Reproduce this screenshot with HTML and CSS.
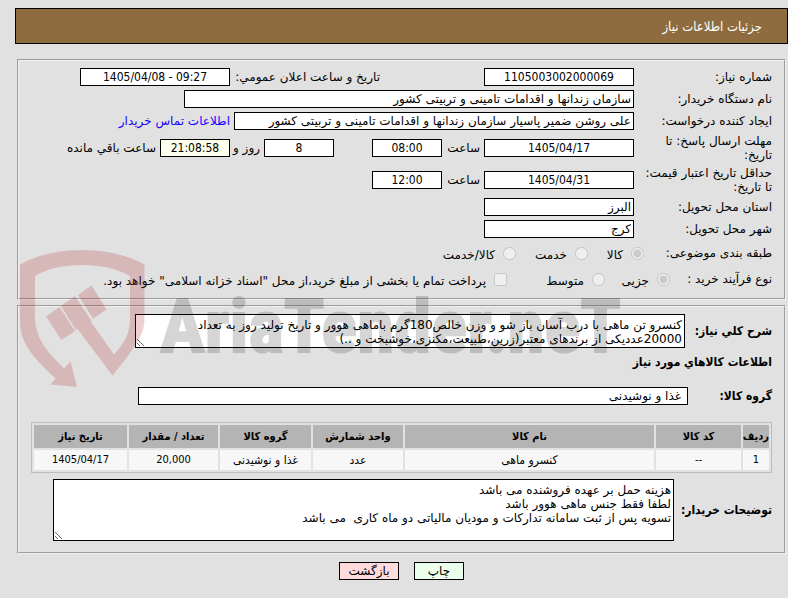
FILE: index.html
```html
<!DOCTYPE html>
<html lang="fa" dir="rtl">
<head>
  <meta charset="utf-8">
  <meta name="viewport" content="width=device-width, initial-scale=1">
  <title>جزئیات اطلاعات نیاز</title>
  <link rel="stylesheet" href="styles.css">
</head>
<body>
  <h1 class="title-bar">جزئیات اطلاعات نیاز</h1>

  <form class="need-form">
    <div class="panel">
      <div class="row">
        <label class="row-label" for="need-no">شماره نیاز:</label>
        <div class="cell"><input class="box medium" type="text" id="need-no" value="1105003002000069" readonly></div>
        <label class="date-label" for="announce">تاریخ و ساعت اعلان عمومي:</label>
        <input class="box medium" type="text" id="announce" value="1405/04/08 - 09:27" dir="ltr" readonly>
      </div>
      <div class="row">
        <label class="row-label" for="buyer">نام دستگاه خریدار:</label>
        <input class="box wide text" type="text" id="buyer" value="سازمان زندانها و اقدامات تامینی و تربیتی کشور" readonly>
      </div>
      <div class="row">
        <label class="row-label" for="creator">ایجاد کننده درخواست:</label>
        <input class="box large text" type="text" id="creator" value="علی روشن ضمیر پاسیار سازمان زندانها و اقدامات تامینی و تربیتی کشور" readonly>
        <a class="contact" href="#">اطلاعات تماس خریدار</a>
      </div>
      <div class="row tall">
        <label class="row-label" for="reply-date">مهلت ارسال پاسخ: تا<br>تاریخ:</label>
        <input class="box medium" type="text" id="reply-date" value="1405/04/17" readonly>
        <label class="hour-label" for="reply-hour">ساعت</label>
        <input class="box small" type="text" id="reply-hour" value="08:00" readonly>
        <input class="box small days" type="text" id="days" value="8" readonly>
        <label class="day-label" for="days">روز و</label>
        <input class="box small remain" type="text" id="remain" value="21:08:58" readonly>
        <label for="remain">ساعت باقي مانده</label>
      </div>
      <div class="row tall">
        <label class="row-label" for="price-date">حداقل تاریخ اعتبار قیمت:<br>تا تاریخ:</label>
        <input class="box medium" type="text" id="price-date" value="1405/04/31" readonly>
        <label class="hour-label" for="price-hour">ساعت</label>
        <input class="box small" type="text" id="price-hour" value="12:00" readonly>
      </div>
      <div class="row">
        <label class="row-label" for="province">استان محل تحویل:</label>
        <input class="box medium text" type="text" id="province" value="البرز" readonly>
      </div>
      <div class="row">
        <label class="row-label" for="city">شهر محل تحویل:</label>
        <input class="box medium text" type="text" id="city" value="کرج" readonly>
      </div>
      <div class="row options">
        <span class="kind-label">طبقه بندی موضوعی:</span>
        <label class="option goods"><input type="radio" name="kind" checked disabled>کالا</label>
        <label class="option service"><input type="radio" name="kind" disabled>خدمت</label>
        <label class="option"><input type="radio" name="kind" disabled>کالا/خدمت</label>
      </div>
      <div class="row options">
        <span class="process-label">نوع فرآیند خرید :</span>
        <label class="option minor"><input type="radio" name="process" checked disabled>جزیی</label>
        <label class="option average"><input type="radio" name="process" disabled>متوسط</label>
        <label class="option"><input type="checkbox" disabled>پرداخت تمام یا بخشی از مبلغ خرید،از محل "اسناد خزانه اسلامی" خواهد بود.</label>
      </div>
    </div>

    <div class="panel goods-panel">
      <div class="row summary-row">
        <label class="bold summary-label" for="summary">شرح کلي نياز:</label>
        <textarea class="area summary" id="summary" readonly>کنسرو تن ماهی با درب آسان باز شو و وزن خالص180گرم باماهی هوور و تاریخ تولید روز به تعداد
20000عددیکی از برندهای معتبر(زرین،طبیعت،مکنزی،خوشبخت و ..)</textarea>
      </div>
      <h2 class="bold section-title">اطلاعات کالاهاي مورد نياز</h2>
      <div class="row group-row">
        <label class="bold group-label" for="group">گروه کالا:</label>
        <input class="box full text" type="text" id="group" value="غذا و نوشیدنی" readonly>
      </div>
      <table class="goods-table">
        <thead>
          <tr>
            <th class="col-row">ردیف</th>
            <th class="col-code">کد کالا</th>
            <th>نام کالا</th>
            <th class="col-unit">واحد شمارش</th>
            <th class="col-group">گروه کالا</th>
            <th class="col-qty">تعداد / مقدار</th>
            <th class="col-date">تاریخ نیاز</th>
          </tr>
        </thead>
        <tbody>
          <tr>
            <td class="num">1</td>
            <td class="num">--</td>
            <td>کنسرو ماهی</td>
            <td>عدد</td>
            <td>غذا و نوشیدنی</td>
            <td class="num">20,000</td>
            <td class="num">1405/04/17</td>
          </tr>
        </tbody>
      </table>
      <div class="row notes-row">
        <label class="bold notes-label" for="notes">توضیحات خریدار:</label>
        <textarea class="area notes" id="notes" readonly>هزینه حمل بر عهده فروشنده می باشد
لطفا فقط جنس ماهی هوور باشد
تسویه پس از ثبت سامانه تدارکات و مودیان مالیاتی دو ماه کاری  می باشد</textarea>
      </div>
    </div>

    <div class="buttons">
      <button class="btn print" type="button">چاپ</button>
      <button class="btn back" type="button">بازگشت</button>
    </div>
  </form>

  <div class="watermark" dir="ltr">
    <svg class="shield" width="126" height="138" viewBox="20 250 126 138">
      <path d="M20 264.500Q46 250 82 250T144.500 264.500V318C144.500 334 137 345 112.500 375.500L77.500 329L76 330L61 306L75 296L91 320L91 322L114 354.500C126 341 130 332 130 318V276Q111 265 82 265T35 276V316C35 336 44 349 64 368.500L70.500 361.500L77 387L50.500 384.500L55.500 378.500C28 353 20 340 20 320Z"/>
      <path d="M46 316.500L59.500 307L75 331L61.500 340Z"/>
      <path d="M78 295L91.500 285.500L106.500 309.500L93 318.500Z"/>
    </svg>
    <span class="brand">AriaTender.neT</span>
  </div>
</body>
</html>
```
FILE: styles.css
```css
* {
  box-sizing: border-box;
}

body {
  margin: 0;
  padding: 8px 0 0 15px;
  position: relative;
  background-color: #e1e1e1;
  color: #000;
  font-family: "DejaVu Sans", sans-serif;
  font-size: 12px;
  line-height: 14px;
}

input, textarea, button {
  font-family: inherit;
}

.title-bar {
  margin: 0 0 15px;
  padding: 10px 25px;
  height: 36px;
  border: 1px solid #000;
  background-color: #8f6c40;
  color: #fff;
  font-family: "DejaVu Sans Condensed", sans-serif;
  font-size: 13px;
  font-weight: normal;
  line-height: 16px;
}

.need-form {
  padding: 0 2px;
}

.panel {
  border: 2px groove #f0f0f0;
  padding: 5px 12px 6px;
}

.goods-panel {
  margin-top: 5px;
  padding: 7px 12px 11px;
}

.row {
  display: flex;
  align-items: center;
  gap: 4px;
  min-height: 22px;
  white-space: nowrap;
}

.row.tall {
  min-height: 32px;
}

.row-label {
  width: 134px;
}

.cell {
  width: 250px;
}

.date-label {
  width: 146px;
}

.hour-label {
  width: 34px;
}

.day-label {
  width: 26px;
}

.box {
  display: block;
  height: 18px;
  padding: 0 2px;
  border: 1px solid #000;
  background-color: #fff;
  font-family: "DejaVu Sans Condensed", sans-serif;
  font-size: 12px;
  text-align: center;
}

.box.text {
  font-family: "DejaVu Sans", sans-serif;
  text-align: right;
}

.small {
  width: 70px;
}

.medium {
  width: 150px;
}

.large {
  width: 400px;
}

.wide {
  width: 450px;
}

.box.full {
  width: 550px;
  padding: 0 6px;
}

.days {
  margin-right: 34px;
}

.remain {
  background-color: #ffffee;
}

.contact {
  color: #1a00ff;
  text-decoration: none;
}

/* radio rows */
.row.options {
  min-height: 26px;
  gap: 0;
}

.kind-label {
  width: 128px;
}

.process-label {
  width: 102px;
}

.option {
  display: flex;
  align-items: center;
  gap: 8px;
  padding-top: 3px;
}

.option input {
  margin: 0 0 3px;
}

.goods {
  width: 56px;
}

.service {
  width: 72px;
}

.minor {
  width: 65px;
}

.average {
  width: 98px;
}

/* goods section */
.bold {
  font-family: "DejaVu Sans Condensed", sans-serif;
  font-size: 12px;
  font-weight: bold;
}

.area {
  display: block;
  padding: 3px 2px 1px;
  border: 1px solid #000;
  background-color: #fff;
  font-size: 12px;
  line-height: 14px;
}

.summary-label {
  width: 83px;
}

.summary {
  width: 550px;
  height: 34px;
}

.section-title {
  margin: 7px 0 16px;
}

.group-label {
  width: 80px;
}

.goods-table {
  width: 741px;
  max-width: 100%;
  margin: 15px 0 6px;
  border: 1px solid #bdbdbd;
  border-spacing: 2px;
  table-layout: fixed;
  font-family: "DejaVu Sans Condensed", sans-serif;
  text-align: center;
}

.goods-table th {
  height: 23px;
  padding: 0;
  background-color: #b4b4b4;
  font-size: 11px;
}

.goods-table td {
  height: 20px;
  padding: 0;
  background-color: #f7f7f7;
}

.goods-table .num {
  font-size: 11px;
}

.col-row {
  width: 26px;
}

.col-code {
  width: 85px;
}

.col-unit {
  width: 90px;
}

.col-group {
  width: 91px;
}

.col-qty {
  width: 89px;
}

.col-date {
  width: 93px;
}

.notes-label {
  width: 94px;
}

.notes {
  width: 621px;
  height: 62px;
}

.buttons {
  display: flex;
  justify-content: center;
  gap: 15px;
  margin-top: 8px;
}

.btn {
  width: 60px;
  height: 18px;
  padding: 0;
  border: 1px solid #000;
  font-size: 12px;
}

.print {
  width: 50px;
  background-color: #ebffeb;
}

.back {
  background-color: #ffdbdb;
}

/* logo laid over the form */
.watermark {
  position: absolute;
  left: 20px;
  top: 250px;
  display: flex;
  align-items: flex-end;
  gap: 14px;
  pointer-events: none;
}

.shield {
  fill: rgba(170, 20, 25, 0.2);
}

.brand {
  padding-bottom: 24px;
  color: #000;
  opacity: 0.16;
  font-family: "Liberation Sans Narrow", "Roboto Condensed", "Liberation Sans", sans-serif;
  font-size: 75px;
  font-weight: bold;
  line-height: 76px;
  -webkit-text-stroke: 2px #000;
}
```
